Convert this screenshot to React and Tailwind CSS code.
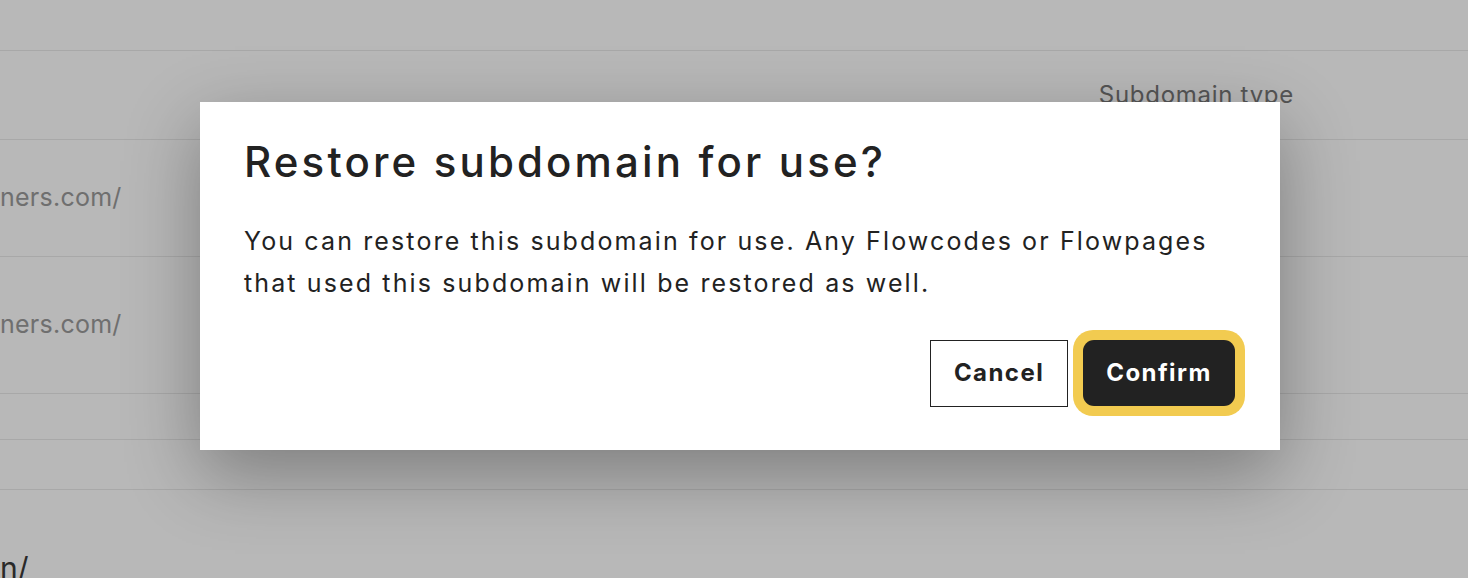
import React from 'react';

const font = { fontFamily: 'Inter, "Noto Sans", sans-serif' };

const App = () => {
  return (
    <div className="relative w-[1468px] h-[578px] overflow-hidden bg-white" style={font}>
      {/* Page behind the dialog */}
      <div className="flex flex-col">
        <div className="h-[51px] border-b border-[#e9e9e9]"></div>
        <div className="h-[89px] border-b border-[#e9e9e9] flex items-center justify-end pr-[174px]">
          <span className="text-[24px] text-[#777777] tracking-[0.03em]">Subdomain type</span>
        </div>
        <div className="h-[117px] border-b border-[#e9e9e9] flex items-center">
          <span className="text-[25px] text-[#9a9a9a] tracking-[0.01em]">ners.com/</span>
        </div>
        <div className="h-[137px] border-b border-[#e9e9e9] flex items-center">
          <span className="text-[25px] text-[#9a9a9a] tracking-[0.01em]">ners.com/</span>
        </div>
        <div className="h-[46px] border-b border-[#e9e9e9]"></div>
        <div className="h-[50px] border-b border-[#e9e9e9]"></div>
        <div className="pt-[56px]">
          <span className="text-[30px] text-[#3a3a3a]">n/</span>
        </div>
      </div>

      {/* Overlay + dialog */}
      <div className="absolute inset-0 bg-black/[0.28] pl-[200px] pt-[102px]">
        <div className="w-[1080px] h-[348px] bg-white shadow-[0_24px_70px_rgba(0,0,0,0.32)] px-[44px] pt-[34px]">
          <h2 className="text-[42px] leading-[52px] text-[#222222] tracking-[0.075em] font-medium whitespace-nowrap">
            Restore subdomain for use?
          </h2>
          <p className="mt-[32px] text-[25px] leading-[42px] text-[#222222] tracking-[0.085em] whitespace-nowrap">
            You can restore this subdomain for use. Any Flowcodes or Flowpages
            <br />
            that used this subdomain will be restored as well.
          </p>
          <div className="mt-[26px] -mr-[9px] flex justify-end items-center gap-[5px]">
            <button className="h-[67px] w-[138px] border border-[#222222] bg-white text-[24px] font-bold text-[#222222] tracking-[0.06em]">
              Cancel
            </button>
            <div className="rounded-[20px] bg-[#f2cb50] p-[10px]">
              <button className="h-[66px] w-[152px] rounded-[11px] bg-[#222222] text-[24px] font-bold text-white tracking-[0.06em]">
                Confirm
              </button>
            </div>
          </div>
        </div>
      </div>
    </div>
  );
};

export default App;
